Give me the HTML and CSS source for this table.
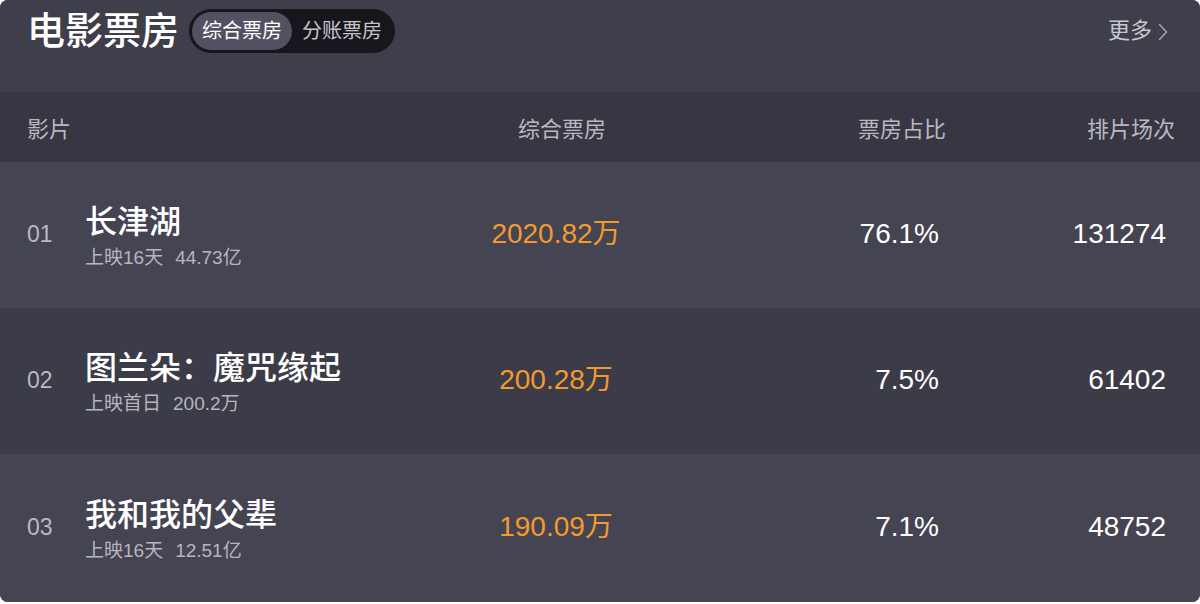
FILE: index.html
```html
<!DOCTYPE html>
<html lang="zh-CN">
<head>
<meta charset="utf-8">
<title>电影票房</title>
<link rel="stylesheet" href="styles.css">
</head>
<body>
<div class="card">
  <header class="top">
    <h1 class="title">电影票房</h1>
    <div class="seg">
      <span class="seg-item active">综合票房</span>
      <span class="seg-item">分账票房</span>
    </div>
    <a class="more">更多<svg class="chev" width="10" height="18" viewBox="0 0 10 18"><path d="M1.5 1.5 L8.5 9 L1.5 16.5" fill="none" stroke="#a9a8b3" stroke-width="1.4" stroke-linecap="round" stroke-linejoin="round"/></svg></a>
  </header>
  <div class="table">
    <div class="row head">
      <div class="c-film">影片</div>
      <div class="c-box">综合票房</div>
      <div class="c-ratio">票房占比</div>
      <div class="c-shows">排片场次</div>
    </div>
    <div class="row body odd">
      <div class="c-film"><span class="rank">01</span><div class="info"><div class="name">长津湖</div><div class="sub">上映16天<span class="gap">44.73亿</span></div></div></div>
      <div class="c-box val orange">2020.82万</div>
      <div class="c-ratio val">76.1%</div>
      <div class="c-shows val">131274</div>
    </div>
    <div class="row body even">
      <div class="c-film"><span class="rank">02</span><div class="info"><div class="name">图兰朵：魔咒缘起</div><div class="sub">上映首日<span class="gap">200.2万</span></div></div></div>
      <div class="c-box val orange">200.28万</div>
      <div class="c-ratio val">7.5%</div>
      <div class="c-shows val">61402</div>
    </div>
    <div class="row body odd last">
      <div class="c-film"><span class="rank">03</span><div class="info"><div class="name">我和我的父辈</div><div class="sub">上映16天<span class="gap">12.51亿</span></div></div></div>
      <div class="c-box val orange">190.09万</div>
      <div class="c-ratio val">7.1%</div>
      <div class="c-shows val">48752</div>
    </div>
  </div>
</div>
</body>
</html>
```

FILE: styles.css
```css
* { box-sizing: border-box; }
html, body {
  margin: 0;
  padding: 0;
  background: #ffffff;
}
body {
  font-family: "Liberation Sans", "Noto Sans CJK SC", sans-serif;
  width: 1200px;
  height: 604px;
}
.card {
  width: 1200px;
  height: 602px;
  border-radius: 8px;
  overflow: hidden;
  background: #3f3e4b;
  display: flex;
  flex-direction: column;
}
.top {
  height: 92px;
  flex: none;
  display: flex;
  align-items: center;
  padding: 0 32px 30px 27px;
  background: #3f3e4b;
}
.title {
  margin: 0;
  font-size: 38px;
  line-height: 44px;
  font-weight: 500;
  color: #ffffff;
}
.seg {
  margin-left: 10px;
  display: flex;
  padding: 3px;
  height: 44px;
  border-radius: 22px;
  background: #17161d;
}
.seg-item {
  height: 38px;
  line-height: 38px;
  padding: 0 10px;
  border-radius: 19px;
  font-size: 20px;
  color: #c5c4cc;
}
.seg-item.active {
  background: #535161;
  color: #ffffff;
}
.more {
  margin-left: auto;
  display: flex;
  align-items: center;
  font-size: 22px;
  line-height: 30px;
  color: #c9c8d1;
}
.chev {
  margin-left: 6px;
  margin-top: 1px;
}
.table {
  flex: 1;
  display: flex;
  flex-direction: column;
}
.row {
  display: grid;
  grid-template-columns: 399px 260px 260px 1fr;
  align-items: center;
  padding: 0 25px 0 27px;
}
.head {
  height: 70px;
  background: #373642;
  font-size: 22px;
  color: #b9b8c1;
}
.body { height: 146px; }
.last { flex: 1; }
.odd { background: #454452; }
.even { background: #3c3b48; }
.c-box { text-align: center; }
.head .c-box { padding-left: 12px; }
.c-ratio, .c-shows { text-align: right; }
.c-film {
  display: flex;
  align-items: center;
}
.rank {
  width: 58px;
  flex: none;
  font-size: 23px;
  color: #bab9c3;
  margin-top: -1px;
}
.info {
  display: flex;
  flex-direction: column;
  margin-top: 3px;
}
.name {
  font-size: 32px;
  line-height: 36px;
  font-weight: 500;
  color: #ffffff;
  white-space: nowrap;
}
.sub {
  margin-top: 6px;
  font-size: 19px;
  line-height: 24px;
  color: #b6b5bf;
  white-space: nowrap;
}
.gap { margin-left: 12px; }
.val {
  font-size: 28px;
  line-height: 32px;
  color: #ffffff;
  margin-top: -2px;
}
.orange { color: #f29a2e; }
.body .c-ratio { padding-right: 7px; }
.body .c-shows { padding-right: 9px; }
```
